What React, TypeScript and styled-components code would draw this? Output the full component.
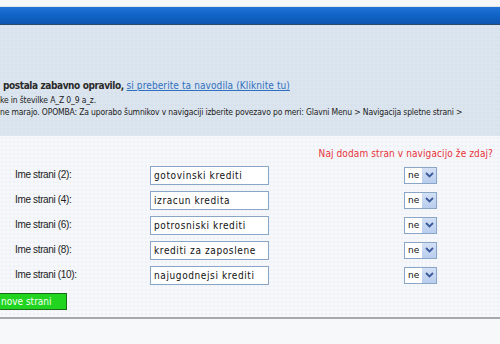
import React from "react";
import styled, { createGlobalStyle } from "styled-components";

const Global = createGlobalStyle`
  html, body { margin: 0; padding: 0; }
  body {
    width: 500px;
    height: 344px;
    overflow: hidden;
    background: #f7f8fa;
    font-family: "DejaVu Sans Condensed", "DejaVu Sans", sans-serif;
  }
`;

const Page = styled.div`
  width: 500px;
  display: flex;
  flex-direction: column;
`;

const TopStrip = styled.div`
  height: 7px;
  background: #f6f7f9;
  border-bottom: 1px solid #e0e4ea;
  box-sizing: border-box;
`;

const BlueBar = styled.div`
  height: 18px;
  box-sizing: border-box;
  background: linear-gradient(#1f74d6, #1163c6 50%, #0d56b0);
  border-bottom: 1px solid #2a4a70;
`;

const InfoPanel = styled.div`
  height: 111px;
  box-sizing: border-box;
  background-color: #d9e3ed;
  background-image: radial-gradient(#e2eaf2 0.6px, transparent 0.8px);
  background-size: 4px 4px;
  padding-top: 53px;
  display: flex;
  flex-direction: column;
  white-space: nowrap;
  overflow: hidden;
`;

const Lead = styled.div`
  font-size: 10px;
  line-height: 16px;
  color: #2a2a2a;
  padding-left: 3px;
`;

const Strong = styled.span`
  font-weight: bold;
  letter-spacing: -0.4px;
`;

const Link = styled.a`
  color: #2f6fbf;
  text-decoration: underline;
  letter-spacing: 0.1px;
`;

const Note = styled.div`
  font-size: 8.5px;
  line-height: 12px;
  color: #222;
  letter-spacing: -0.15px;
`;

const FormArea = styled.div`
  height: 183px;
  box-sizing: border-box;
  background-color: #f5f7fa;
  background-image: radial-gradient(#e4e9ef 0.6px, transparent 0.8px);
  background-size: 4px 4px;
  padding-top: 11px;
  display: flex;
  flex-direction: column;
  border-bottom: 2px solid #a6a8ab;
`;

const Question = styled.div`
  align-self: flex-end;
  margin-right: 7px;
  font-family: "DejaVu Sans Condensed", "DejaVu Sans", sans-serif;
  font-size: 10px;
  letter-spacing: 0.1px;
  line-height: 14px;
  color: #e8323a;
  margin-bottom: 2px;
`;

const Row = styled.div`
  height: 25px;
  display: grid;
  grid-template-columns: 150px 254px 40px;
  align-items: center;
`;

const Label = styled.div`
  padding-left: 15px;
  font-family: "Liberation Sans", Arial, sans-serif;
  font-size: 10px;
  letter-spacing: -0.35px;
  color: #222;
  margin-top: -3px;
`;

const TextBox = styled.div`
  width: 119px;
  height: 19px;
  box-sizing: border-box;
  border: 1px solid #8aa6c6;
  background: #fff;
  font-family: "DejaVu Sans Condensed", "DejaVu Sans", sans-serif;
  font-size: 10px;
  line-height: 17px;
  padding-left: 3px;
  color: #111;
  letter-spacing: 0.6px;
  white-space: nowrap;
  overflow: hidden;
`;

const Select = styled.div`
  width: 33px;
  height: 17px;
  box-sizing: border-box;
  border: 1px solid #8aa6c6;
  background: #fff;
  display: flex;
  align-items: stretch;
  margin-top: -1px;
`;

const SelectText = styled.span`
  flex: 1;
  font-family: "DejaVu Sans", sans-serif;
  font-size: 9px;
  line-height: 15px;
  padding-left: 3px;
  color: #111;
`;

const Arrow = styled.span`
  width: 14px;
  background: linear-gradient(#d3e0f5, #b9cdee);
  display: flex;
  align-items: center;
  justify-content: center;
`;

const Button = styled.div`
  width: 67px;
  height: 17px;
  box-sizing: border-box;
  margin-top: 5px;
  background: #20d420;
  border: 1px solid #1a6a1a;
  border-left: none;
  color: #f4fff4;
  font-family: "DejaVu Sans Condensed", "DejaVu Sans", sans-serif;
  font-size: 10px;
  line-height: 15px;
  padding-left: 1px;
`;

const rows = [
  { n: 2, v: "gotovinski krediti" },
  { n: 4, v: "izracun kredita" },
  { n: 6, v: "potrosniski krediti" },
  { n: 8, v: "krediti za zaposlene" },
  { n: 10, v: "najugodnejsi krediti" },
];

export default function App() {
  return (
    <Page>
      <Global />
      <TopStrip />
      <BlueBar />
      <InfoPanel>
        <Lead>
          <Strong>postala zabavno opravilo, </Strong>
          <Link>si preberite ta navodila (Kliknite tu)</Link>
        </Lead>
        <Note>ke in številke A_Z 0_9 a_z.</Note>
        <Note>
          ne marajo. OPOMBA: Za uporabo šumnikov v navigaciji izberite povezavo po meri: Glavni Menu &gt; Navigacija spletne strani &gt;
        </Note>
      </InfoPanel>
      <FormArea>
        <Question>Naj dodam stran v navigacijo že zdaj?</Question>
        {rows.map((r) => (
          <Row key={r.n}>
            <Label>Ime strani ({r.n}):</Label>
            <TextBox>{r.v}</TextBox>
            <Select>
              <SelectText>ne</SelectText>
              <Arrow>
                <svg width="9" height="6" viewBox="0 0 9 6">
                  <path d="M1 1 L4.5 4.5 L8 1" fill="none" stroke="#3a5a9a" strokeWidth="1.8" />
                </svg>
              </Arrow>
            </Select>
          </Row>
        ))}
        <Button>nove strani</Button>
      </FormArea>
    </Page>
  );
}
